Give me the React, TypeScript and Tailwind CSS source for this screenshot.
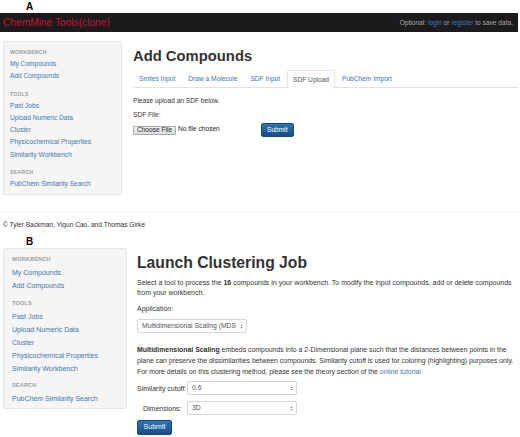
import React from "react";

const FONT = { fontFamily: '"Liberation Sans", Arial, Helvetica, sans-serif' };

type NavGroup = { title: string; items: string[] };

const NAV: NavGroup[] = [
  { title: "Workbench", items: ["My Compounds", "Add Compounds"] },
  { title: "Tools", items: ["Past Jobs", "Upload Numeric Data", "Cluster", "Physicochemical Properties", "Similarity Workbench"] },
  { title: "Search", items: ["PubChem Similarity Search"] },
];

function Sidebar({ large }: { large?: boolean }) {
  const row = large ? "h-[13px] leading-[13px]" : "h-[12.2px] leading-[12.2px]";
  const item = large ? "text-[7px]" : "text-[6.6px]";
  const head = large ? "text-[5.5px]" : "text-[5.2px]";
  const gaps = large ? ["mt-[5px]", "mt-[4px]"] : ["mt-[5px]", "mt-[5px]"];
  return (
    <div
      className={
        "ml-[3px] shrink-0 rounded-[2px] border border-[#e6e6e6] bg-[#f5f5f5] " +
        (large ? "h-[161px] w-[124px] pl-[8px] pt-[4px]" : "h-[154px] w-[119px] pl-[6px] pt-[4px]")
      }
    >
      {NAV.map((g, gi) => (
        <div key={g.title} className={gi > 0 ? gaps[gi - 1] : ""}>
          <div className={`${row} ${head} font-bold uppercase tracking-[0.2px] text-[#9a9a9a]`}>{g.title}</div>
          {g.items.map((it) => (
            <div key={it} className={`${row} ${item} whitespace-nowrap text-[#3f77ad]`}>
              {it}
            </div>
          ))}
        </div>
      ))}
    </div>
  );
}

function Caret() {
  return (
    <svg width="3" height="5" viewBox="0 0 3 5" className="shrink-0">
      <path d="M1.5 0.6 L2.6 2.1 L0.4 2.1 Z" fill="#777" />
      <path d="M1.5 4.4 L2.6 2.9 L0.4 2.9 Z" fill="#777" />
    </svg>
  );
}

function Select({ value, w, h }: { value: string; w: string; h: string }) {
  return (
    <div
      className={`${w} ${h} flex shrink-0 items-center justify-between rounded-[2px] border border-[#d6d6d6] bg-white pl-[4px] pr-[3px] text-[6.8px] text-[#555]`}
    >
      <span className="whitespace-nowrap">{value}</span>
      <Caret />
    </div>
  );
}

function SubmitButton({ w, h, size }: { w: string; h: string; size: string }) {
  return (
    <div
      className={`${w} ${h} ${size} flex items-center justify-center rounded-[2px] border border-[#17497e] bg-gradient-to-b from-[#2f75b6] to-[#174d88] text-white`}
    >
      Submit
    </div>
  );
}

const TABS = ["Smiles Input", "Draw a Molecule", "SDF Input", "SDF Upload", "PubChem Import"];

export default function App() {
  return (
    <div className="h-[437px] w-[520px] overflow-hidden bg-white text-[#333]" style={FONT}>
      {/* Panel A */}
      <div className="h-[13px] pl-[26px] text-[10px] font-bold leading-[13px] text-black">A</div>
      <div className="flex h-[19px] w-[518px] items-center justify-between bg-[#1c1a1c] pl-[3px] pr-[5px]">
        <span className="text-[10.2px] text-[#c4152e]">ChemMine Tools(clone)</span>
        <span className="text-[6.6px] text-[#a8a8a8]">
          Optional: <span className="text-[#3b7dc0]">login</span> or{" "}
          <span className="text-[#3b7dc0]">register</span> to save data.
        </span>
      </div>

      <div className="mt-[9px] flex h-[154px]">
        <Sidebar />
        <div className="ml-[11px] flex w-[385px] flex-col">
          <div className="mt-[7.5px] h-[15px] text-[14.8px] font-bold leading-[15px] text-[#333]">Add Compounds</div>
          <div className="mt-[6.5px] flex h-[18px] border-b border-[#e2e2e2]">
            {TABS.map((t) => {
              const active = t === "SDF Upload";
              return (
                <div
                  key={t}
                  className={
                    "mr-[1px] flex items-center whitespace-nowrap text-[6.6px] " +
                    (active
                      ? "h-[19px] rounded-t-[2px] border border-b-0 border-[#e2e2e2] bg-white px-[5px] text-[#555]"
                      : "h-[18px] px-[6px] text-[#3f77ad]")
                  }
                >
                  {t}
                </div>
              );
            })}
          </div>
          <div className="mt-[8px] h-[10px] text-[6.6px] leading-[10px]">Please upload an SDF below.</div>
          <div className="mt-[4px] h-[10px] text-[6.6px] leading-[10px]">SDF File:</div>
          <div className="mt-[3px] flex h-[14px] items-center">
            <div className="flex h-[9px] w-[43px] items-center justify-center rounded-[1px] border border-[#a9a9a9] bg-gradient-to-b from-[#f2f2f2] to-[#dedede] text-[6.6px] text-[#222]">
              Choose File
            </div>
            <span className="mb-[3px] ml-[2px] whitespace-nowrap text-[6.6px] text-[#222]">No file chosen</span>
            <div className="ml-[41px]">
              <SubmitButton w="w-[33px]" h="h-[14px]" size="text-[6.6px]" />
            </div>
          </div>
        </div>
      </div>

      <div className="mt-[17px] flex h-[24px] items-center border-t border-[#f6f6f6] pl-[3px] text-[6.6px] text-[#333]">
        © Tyler Backman, Yiqun Cao, and Thomas Girke
      </div>

      {/* Panel B */}
      <div className="h-[12px] pl-[26px] text-[10px] font-bold leading-[12px] text-black">B</div>
      <div className="flex">
        <Sidebar large />
        <div className="ml-[10px] flex flex-col text-[7px] text-[#333]">
          <div className="mt-[7px] h-[16px] text-[15.7px] font-bold leading-[16px] text-[#333]">Launch Clustering Job</div>
          <p className="mt-[7px] whitespace-nowrap leading-[10px]">
            Select a tool to process the <b>16</b> compounds in your workbench. To modify the input compounds, add or delete compounds
            <br />
            from your workbench.
          </p>
          <div className="mt-[6px] h-[10px] leading-[10px]">Application:</div>
          <div className="mt-[5px]">
            <Select value="Multidimensional Scaling (MDS" w="w-[110px]" h="h-[14px]" />
          </div>
          <p className="mt-[10.5px] whitespace-nowrap text-[6.9px] leading-[11px]">
            <b>Multidimensional Scaling</b> embeds compounds into a 2-Dimensional plane such that the distances between points in the
            <br />
            plane can preserve the dissimilarities between compounds. Similarity cutoff is used for coloring (highlighting) purposes only.
            <br />
            For more details on this clustering method, please see the theory section of the{" "}
            <span className="text-[#3f77ad]">online tutorial.</span>
          </p>
          <div className="mt-[4.5px] flex items-center">
            <div className="mt-[2px] w-[50px] whitespace-nowrap">Similarity cutoff:</div>
            <Select value="0.6" w="w-[110px]" h="h-[14px]" />
          </div>
          <div className="mt-[6px] flex items-center">
            <div className="mt-[2px] w-[50px] whitespace-nowrap pl-[6px]">Dimensions:</div>
            <Select value="3D" w="w-[110px]" h="h-[14px]" />
          </div>
          <div className="mt-[5px]">
            <SubmitButton w="w-[35px]" h="h-[15px]" size="text-[7px]" />
          </div>
        </div>
      </div>
    </div>
  );
}
